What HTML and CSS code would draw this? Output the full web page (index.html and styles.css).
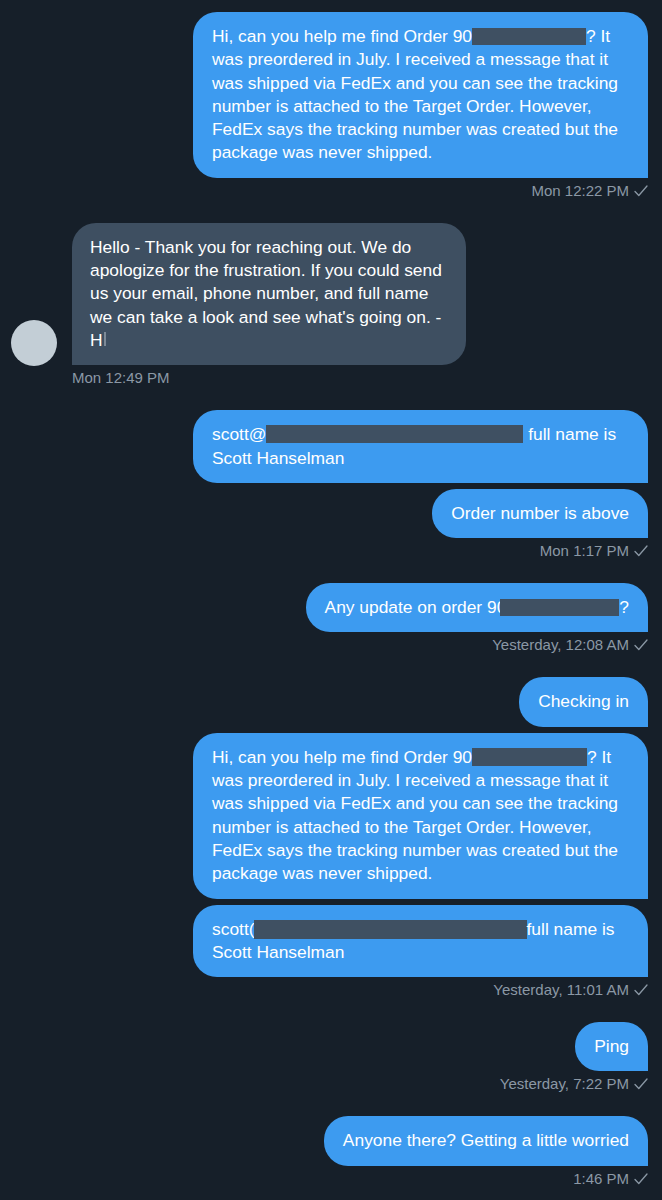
FILE: index.html
```html
<!DOCTYPE html>
<html lang="en">
<head>
<meta charset="utf-8">
<title>Messages</title>
<link rel="stylesheet" href="styles.css">
</head>
<body>
<main class="thread">

  <section class="group sent">
    <div class="bubble wide">Hi, can you help me find Order 90<span class="redact r-order"></span>? It<br>was preordered in July. I received a message that it<br>was shipped via FedEx and you can see the tracking<br>number is attached to the Target Order. However,<br>FedEx says the tracking number was created but the<br>package was never shipped.</div>
    <div class="meta">Mon 12:22 PM <svg class="check" viewBox="0 0 14 12" width="14" height="12"><polyline points="1,6.5 4.8,10.5 13,1" /></svg></div>
  </section>

  <section class="group received">
    <div class="row">
      <div class="avatar"></div>
      <div class="bubble in">Hello - Thank you for reaching out. We do<br>apologize for the frustration. If you could send<br>us your email, phone number, and full name<br>we can take a look and see what's going on. -<br>H<span class="cut"></span></div>
    </div>
    <div class="meta">Mon 12:49 PM</div>
  </section>

  <section class="group sent">
    <div class="bubble wide">scott@<span class="redact r-mail"></span> full name is<br>Scott Hanselman</div>
    <div class="bubble">Order number is above</div>
    <div class="meta">Mon 1:17 PM <svg class="check" viewBox="0 0 14 12" width="14" height="12"><polyline points="1,6.5 4.8,10.5 13,1" /></svg></div>
  </section>

  <section class="group sent">
    <div class="bubble">Any update on order 90<span class="redact r-any"></span>?</div>
    <div class="meta">Yesterday, 12:08 AM <svg class="check" viewBox="0 0 14 12" width="14" height="12"><polyline points="1,6.5 4.8,10.5 13,1" /></svg></div>
  </section>

  <section class="group sent">
    <div class="bubble">Checking in</div>
    <div class="bubble wide">Hi, can you help me find Order 90<span class="redact r-order2"></span>? It<br>was preordered in July. I received a message that it<br>was shipped via FedEx and you can see the tracking<br>number is attached to the Target Order. However,<br>FedEx says the tracking number was created but the<br>package was never shipped.</div>
    <div class="bubble wide">scott(<span class="redact r-mail2"></span>full name is<br>Scott Hanselman</div>
    <div class="meta">Yesterday, 11:01 AM <svg class="check" viewBox="0 0 14 12" width="14" height="12"><polyline points="1,6.5 4.8,10.5 13,1" /></svg></div>
  </section>

  <section class="group sent">
    <div class="bubble">Ping</div>
    <div class="meta">Yesterday, 7:22 PM <svg class="check" viewBox="0 0 14 12" width="14" height="12"><polyline points="1,6.5 4.8,10.5 13,1" /></svg></div>
  </section>

  <section class="group sent">
    <div class="bubble">Anyone there? Getting a little worried</div>
    <div class="meta">1:46 PM <svg class="check" viewBox="0 0 14 12" width="14" height="12"><polyline points="1,6.5 4.8,10.5 13,1" /></svg></div>
  </section>

</main>
</body>
</html>
```

FILE: styles.css
```css
html, body {
  margin: 0;
  padding: 0;
  background: #161f29;
}

body {
  font-family: "Liberation Sans", Arial, sans-serif;
  color: #ffffff;
}

.thread {
  padding: 12px 14px 0 11px;
  display: flex;
  flex-direction: column;
  gap: 22px;
}

.group {
  display: flex;
  flex-direction: column;
  gap: 6px;
}

.group.sent {
  align-items: flex-end;
}

.group.received {
  align-items: flex-start;
}

.row {
  display: flex;
  align-items: flex-end;
  gap: 15px;
}

.avatar {
  width: 46px;
  height: 46px;
  border-radius: 50%;
  background: #c3ced6;
  flex: none;
  margin-bottom: -1px;
}

.bubble {
  font-size: 17.4px;
  line-height: 23.3px;
  padding: 13px 19px;
  border-radius: 24px 24px 0 24px;
  background: #3d9bf0;
  color: #ffffff;
  white-space: nowrap;
  box-sizing: border-box;
}

.bubble.wide {
  width: 455px;
}

.bubble.in {
  background: #3e4f61;
  border-radius: 24px 24px 24px 0;
  width: 394px;
  padding-left: 18px;
}

.meta {
  display: flex;
  align-items: center;
  gap: 5px;
  font-size: 15px;
  line-height: 20px;
  color: #8b98a5;
  margin-top: -3px;
}

.received .meta {
  margin-left: 61px;
}

.check {
  fill: none;
  stroke: #8b98a5;
  stroke-width: 1.3;
  stroke-linecap: round;
  stroke-linejoin: round;
}

.redact {
  display: inline-block;
  height: 17px;
  vertical-align: -3px;
  background: #3f5062;
}

.r-order { width: 114px; }
.r-order2 { width: 115px; height: 18px; }
.r-mail { width: 257px; height: 18px; }
.r-mail2 { width: 273px; height: 19px; vertical-align: -4px; margin-left: -1px; }
.r-any { width: 119px; margin-left: -6px; }

.cut {
  display: inline-block;
  width: 2px;
  height: 14px;
  margin-left: 1px;
  background: #7d8a97;
}
```
